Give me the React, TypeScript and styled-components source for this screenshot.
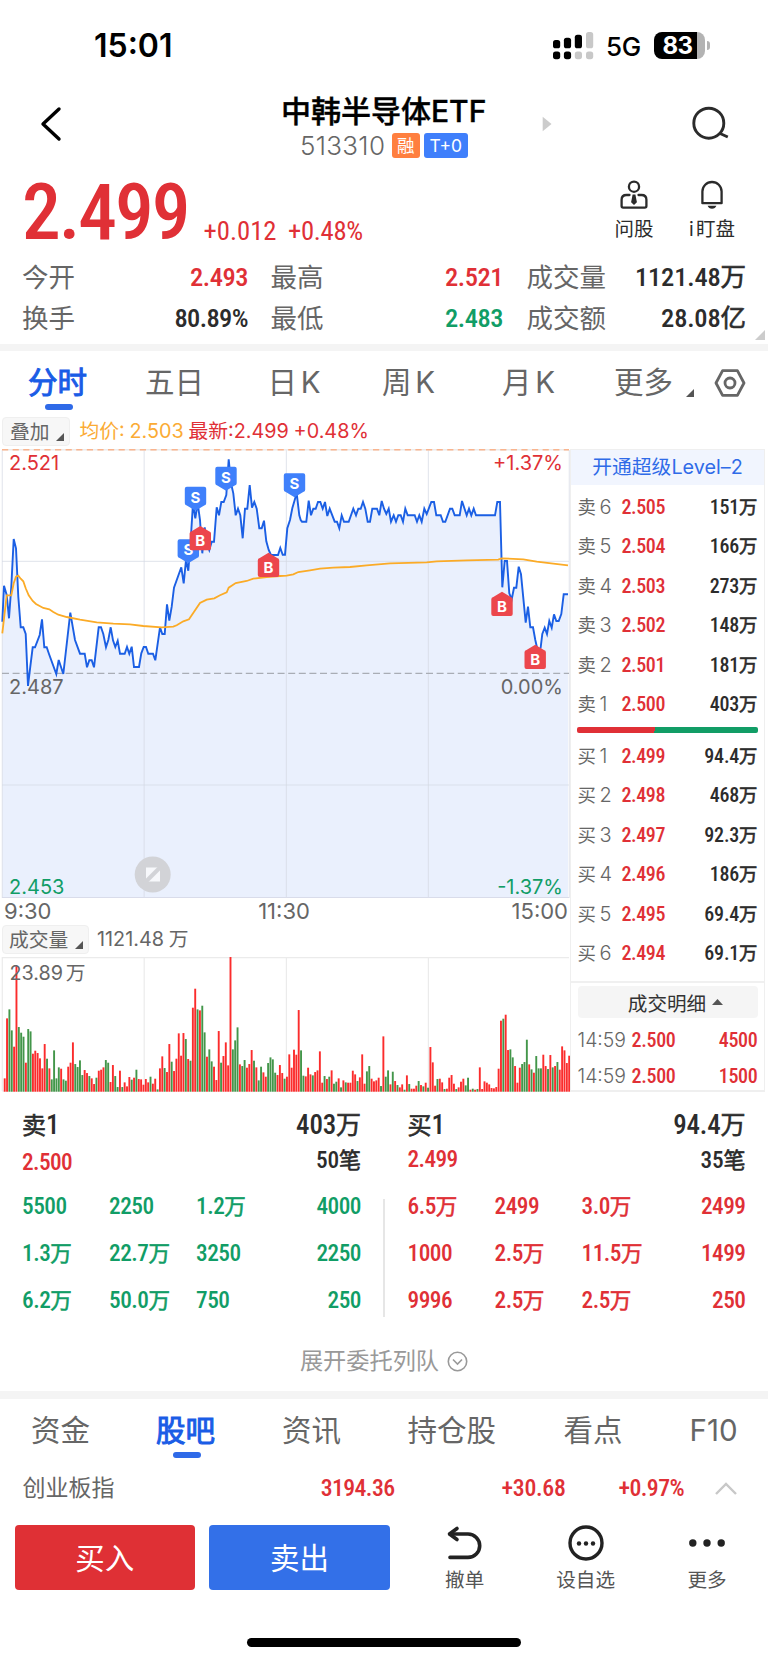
import React from 'react';
import styled, { createGlobalStyle, css } from 'styled-components';

const RED = '#e03036';
const GREEN = '#119d66';
const INK = '#2c2c2c';
const GRAY = '#666666';
const BLUE = '#1a5ce6';

const Global = createGlobalStyle`
  * { box-sizing: border-box; }
  body {
    margin: 0;
    background: #fff;
    color: ${INK};
    font-family: Inter, "Noto Sans CJK SC", sans-serif;
    white-space: nowrap;
  }
`;

const Screen = styled.main`
  width: 768px;
  height: 1662px;
  display: flex;
  flex-direction: column;
  overflow: hidden;
`;

const Num = styled.span<{ $size?: number; $color?: string; $weight?: number; $ls?: number }>`
  font-family: "Roboto Condensed", "Noto Sans CJK SC", sans-serif;
  font-weight: ${p => p.$weight ?? 500};
  font-size: ${p => p.$size ?? 20}px;
  letter-spacing: ${p => p.$ls ?? 0}px;
  color: ${p => p.$color ?? INK};
`;

const Unit = styled.span<{ $size: number }>`
  font-family: "Noto Sans CJK SC", sans-serif;
  font-size: ${p => p.$size}px;
  font-weight: 400;
  line-height: 0;
  letter-spacing: 0;
  -webkit-text-stroke: 0.6px currentColor;
`;

/* ---------- status bar ---------- */
const StatusBar = styled.header`
  height: 92px;
  padding: 30px 58px 0 94px;
  display: flex;
  justify-content: space-between;
  color: #000;
`;
const Clock = styled.div`
  font-size: 32px;
  line-height: 32px;
  font-weight: 600;
`;
const StatusRight = styled.div`
  display: flex;
  height: 31px;
  align-items: center;
`;
const Network = styled.span`
  font-size: 26px;
  font-weight: 500;
  letter-spacing: -0.4px;
  line-height: 30px;
  width: 34px;
  margin: 3px 14px 0 12px;
`;
const Battery = styled.div`
  width: 51px;
  height: 27px;
  border-radius: 8px;
  background: linear-gradient(90deg, #000 43px, #b3b3b3 43px);
  color: #fff;
  font-size: 24px;
  font-weight: 700;
  line-height: 27px;
  padding-left: 8.5px;
  letter-spacing: -0.5px;
`;
const BatteryNub = styled.div`
  width: 3px;
  height: 9px;
  margin-left: 2px;
  border-radius: 0 4px 4px 0;
  background: #b3b3b3;
`;

/* ---------- title ---------- */
const TitleBar = styled.div`
  height: 80px;
  display: grid;
  grid-template-columns: 281px 206px 1fr 100px;
`;
const BackIcon = styled.svg`margin: 13px 0 0 38px;`;
const TitleBlock = styled.div`
  display: flex;
  flex-direction: column;
  align-items: flex-start;
`;
const Name = styled.div`
  font-size: 30px;
  line-height: 39px;
  color: #000;
  font-weight: 500;
  -webkit-text-stroke: 0.4px #000;
`;
const CodeRow = styled.div`
  display: flex;
  align-items: center;
  height: 28px;
  margin-left: 19px;
`;
const Code = styled.span`
  width: 91.5px;
  font-size: 26px;
  font-weight: 350;
  letter-spacing: 0.3px;
  color: ${GRAY};
`;
const Tag = styled.span<{ $bg: string; $w: number }>`
  flex: 0 0 ${p => p.$w}px;
  height: 25px;
  border-radius: 3px;
  background: ${p => p.$bg};
  color: #fff;
  font-size: 17.5px;
  line-height: 25px;
  text-align: center;
  & + & { margin-left: 4px; }
`;
const NextIcon = styled.svg`margin: 24px 0 0 54.5px;`;
const SearchIcon = styled.svg`margin: 12px 0 0 20px;`;

/* ---------- quote ---------- */
const Quote = styled.section`
  height: 82px;
  padding-left: 22px;
  display: flex;
`;
const Price = styled(Num)`
  width: 181.5px;
  line-height: 82px;
`;
const Change = styled(Num)`
  width: 84.5px;
  line-height: 36px;
  padding-top: 41px;
`;
const QuickAction = styled.div<{ $w: number; $ml: number }>`
  width: ${p => p.$w}px;
  margin-left: ${p => p.$ml}px;
  padding-top: 8px;
  display: flex;
  flex-direction: column;
  align-items: center;
  font-size: 19.5px;
  line-height: 24px;
  svg { margin-bottom: 8px; }
`;
const SmallI = styled.span`letter-spacing: 2.5px;`;
const Stats = styled.section`
  height: 90px;
  padding: 3px 22px 0;
  display: grid;
  grid-template-columns: 226px 255px 243px;
  grid-auto-rows: 41px;
  position: relative;
`;
const Stat = styled.div<{ $pl?: number }>`
  display: flex;
  justify-content: space-between;
  line-height: 41px;
  font-size: 26.5px;
  color: ${GRAY};
  padding-left: ${p => p.$pl ?? 0}px;
`;
const StatValue = styled(Num)`
  line-height: 39.5px;
`;
const Corner = styled.svg`
  position: absolute;
  right: 3px;
  bottom: 4px;
`;
const Band = styled.div<{ $h: number }>`
  flex: none;
  height: ${p => p.$h}px;
  background: #f4f4f4;
`;

/* ---------- tabs ---------- */
const Tabs = styled.nav<{ $h: number; $pad: number; $cols: string }>`
  height: ${p => p.$h}px;
  padding-left: ${p => p.$pad}px;
  display: grid;
  grid-template-columns: ${p => p.$cols};
  justify-items: start;
`;
const Tab = styled.div<{ $active?: boolean }>`
  padding-top: 10px;
  font-size: 29.5px;
  line-height: 43px;
  word-spacing: -4.5px;
  color: ${GRAY};
  display: flex;
  flex-direction: column;
  align-items: center;
  ${p => p.$active && css`
    color: ${BLUE};
    -webkit-text-stroke: 1px ${BLUE};
    &::after {
      content: '';
      width: 28px;
      height: 6px;
      margin-left: 2px;
      border-radius: 3px;
      background: #2f6ae8;
    }
  `}
`;
const MoreTab = styled.div`
  display: flex;
  align-items: flex-end;
  svg { margin: 0 0 7.5px 13px; }
`;
const HexIcon = styled.svg`margin-top: 16.5px;`;

/* ---------- market area ---------- */
const Market = styled.section`
  display: flex;
  height: 676px;
`;
const ChartCol = styled.div`
  width: 570px;
  padding-left: 2px;
  display: flex;
  flex-direction: column;
`;
const Legend = styled.div<{ $h: number }>`
  flex: none;
  height: ${p => p.$h}px;
  display: flex;
  align-items: flex-start;
  font-size: 19.8px;
  line-height: 29px;
  word-spacing: -0.8px;
  color: ${GRAY};
`;
const Chip = styled.div<{ $w: number; $pl: number; $mr: number }>`
  width: ${p => p.$w}px;
  height: 29px;
  padding: 0 5px 4px ${p => p.$pl}px;
  margin-right: ${p => p.$mr}px;
  border: 1px solid #efefef;
  border-radius: 4px;
  background: #f7f7f7;
  line-height: 28px;
  display: flex;
  justify-content: space-between;
  svg { align-self: flex-end; }
`;
const Avg = styled.span`color: #fbab35;`;
const Last = styled.span`color: ${RED};`;
const Axis = styled.div`
  flex: none;
  height: 26px;
  padding: 0 2px;
  display: grid;
  grid-template-columns: 1fr auto 1fr;
  font-size: 22px;
  line-height: 25px;
  color: ${GRAY};
  & > :nth-child(2) { margin-right: 4px; }
  & > :last-child { text-align: right; }
`;
const ChartSvg = styled.svg`
  display: block;
  margin-left: -2px;
  flex: none;
  font-family: Inter, "Noto Sans CJK SC", sans-serif;
`;
const AxisMax = styled.text`word-spacing: -3px;`;

/* ---------- order book ---------- */
const Book = styled.aside`
  width: 195px;
  height: 643px;
  margin-top: 32px;
  border: 1px solid #efefef;
  border-bottom-width: 2px;
  display: flex;
  flex-direction: column;
  & > * { flex: none; }
`;
const Level2 = styled.div`
  height: 35px;
  background: #f1f5fe;
  color: #2f6be8;
  font-size: 19.8px;
  line-height: 34px;
  text-align: center;
`;
const BookRow = styled.div`
  height: 39.5px;
  line-height: 39.5px;
  padding: 0 6.5px;
  display: grid;
  grid-template-columns: 22px 22px 1fr auto;
  font-size: 18.4px;
  color: ${GRAY};
`;
const Digit = styled.span`font-size: 20px; font-weight: 350;`;
const Asks = styled.div`padding-top: 2.5px; height: 242.3px;`;
const Ratio = styled.div`
  height: 6px;
  margin: 0 6px;
  border-radius: 2px;
  background: linear-gradient(100deg, ${RED} 43%, ${GREEN} 43%);
`;
const Bids = styled.div`padding-top: 3.5px; height: 249.7px; border-bottom: 2px solid #f0f0f0;`;
const Detail = styled.div`
  height: 32px;
  margin: 3.5px 6px 3.2px 7px;
  background: #f5f5f5;
  border-radius: 4px;
  display: flex;
  align-items: center;
  justify-content: center;
  gap: 6px;
  font-size: 19.6px;
  padding-left: 15px;
  color: #333;
`;
const Trade = styled.div`
  height: 36px;
  line-height: 36px;
  padding: 0 6.5px;
  display: grid;
  grid-template-columns: 54px 1fr auto;
  font-size: 19.4px;
  font-weight: 350;
  color: ${GRAY};
`;

/* ---------- queue ---------- */
const Queue = styled.section`
  height: 232px;
  display: grid;
  grid-template-columns: 384px 384px;
`;
const Side = styled.div<{ $first?: boolean }>`
  padding: 13px ${p => (p.$first ? 23 : 22.5)}px 0 ${p => (p.$first ? 22 : 23.5)}px;
`;
const SideLine = styled.div<{ $h: number }>`
  height: ${p => p.$h}px;
  line-height: ${p => p.$h}px;
  display: flex;
  justify-content: space-between;
`;
const SidePrice = styled(Num)<{ $dy: number }>`margin-top: ${p => p.$dy}px;`;
const QGrid = styled.div<{ $divided: boolean }>`
  margin-top: 7.4px;
  display: grid;
  grid-template-columns: 87px 87px 1fr auto;
  grid-auto-rows: 46.6px;
  line-height: 46.6px;
  position: relative;
  & > :nth-child(4n) { text-align: right; }
  ${p => p.$divided && css`
    &::after {
      content: '';
      position: absolute;
      right: -23.5px;
      top: 16px;
      width: 1.5px;
      height: 118px;
      background: #e6e6e6;
    }
  `}
`;
const Expand = styled.div`
  height: 66px;
  padding-top: 11px;
  line-height: 50px;
  display: flex;
  justify-content: center;
  gap: 8px;
  font-size: 23.2px;
  color: #999;
  align-items: flex-start;
  svg { margin-top: 14.5px; }
`;

/* ---------- bottom ---------- */
const IndexRow = styled.div`
  height: 58px;
  padding: 0 31px 0 22.5px;
  line-height: 58px;
  display: grid;
  grid-template-columns: 150px 222px 171px 118.5px 1fr;
  justify-items: end;
  align-items: center;
  & > :first-child { justify-self: start; }
`;
const IndexName = styled.span`font-size: 23px; color: ${GRAY};`;
const Actions = styled.footer`
  height: 112px;
  padding: 8px 0 0 14.5px;
  display: flex;
  align-items: flex-start;
`;
const TradeButton = styled.button<{ $bg: string }>`
  width: 180.5px;
  height: 65px;
  margin-right: 14.5px;
  border: 0;
  border-radius: 4px;
  background: ${p => p.$bg};
  color: #fff;
  font: 400 29.5px/62px "Noto Sans CJK SC", sans-serif;
  padding: 0 0 3px;
`;
const ToolButton = styled.div<{ $w: number }>`
  width: ${p => p.$w}px;
  display: flex;
  flex-direction: column;
  align-items: center;
  font-size: 19.6px;
  line-height: 26px;
  color: #555;
  svg { margin-bottom: 6px; }
`;
const HomeBar = styled.div`
  width: 274px;
  height: 9.5px;
  margin: 8.5px auto 0;
  border-radius: 5px;
  background: #000;
`;

/* ---------- data ---------- */
const PX = 1 / 3;

const VOLUME = `655R 475R 448G 511G 560R 318R 501G 518G 530G 608R 507G 514G 581R 572R 579R 595R 625R 552R 596G 625R
658G 571G 655G 622G 626R 658G 662G 620R 608R 547R 612G 621G 601G 645G 630R 639R 648G 655R 672R 653G
632R 629R 622R 600G 608G 666R 615R 648G 681G 632R 681G 667R 679R 651R 659G 653R 629G 657R 658R 674R
657R 667R 650G 671R 656R 688G 625R 589R 624G 636R 552R 605G 633R 596R 520R 587R 519R 537G 597R 602G
443R 386R 448G 451R 437G 517G 590R 568G 604G 620R 660R 513R 608G 588R 547R 616R 291R 568G 541G 502G
613R 618G 600G 623R 612R 570R 602G 622R 661G 620G 637R 650R 609G 592G 598G 638G 645R 615R 639R 656G
650R 583R 623R 569R 584R 450R 571G 647G 649R 623R 643R 646G 636R 631R 574R 668R 648G 657R 650G 631R
671G 665G 655R 682G 661R 667G 668R 668R 632R 643R 663G 652R 583R 671R 634G 618G 656R 664R 661R 653R
678G 529R 650G 631G 673R 635G 663R 675G 682R 673R 689G 646R 672G 686R 686R 677R 663G 675R 679G 668R
683G 561R 607R 677R 657G 656R 667R 687G 686R 653R 645R 671R 687G 682R 665R 656R 676G 653G 689R 686G
689R 687G 622R 687R 664R 668R 673R 684R 685R 681R 626R 482R 476G 464R 570R 568G 592G 618R 668R 623R
612G 606G 539G 613R 628G 638R 588G 625G 625G 584R 618R 627G 585R 622G 618R 606G 629R 559R 571R 609R 587R`
  .split(/\s+/).map(v => ({ h: (695 - parseInt(v, 10)) * PX, up: v.endsWith('R') }));

const toPoints = (src: string, dx = 0) =>
  src.split(/\s+/).map(p => p.split(',').map(Number)).map(([x, y]) => `${((x + dx) * PX).toFixed(1)},${(y * PX - 9).toFixed(1)}`).join(' ');

const PRICE_AM = `7,545 12,437 20,465 27,535 34,440 41,297 48,325 55,470 62,562 70,562 77,582 84,738 91,680 98,622 105,622
119,585 126,538 133,622 140,622 147,642 169,702 176,660 190,702 211,518 218,560 225,600 240,641 254,641 261,682 268,661
275,661 282,682 296,562 303,562 310,582 318,622 325,600 332,562 339,601 346,621 353,602 360,641 374,641 381,621 388,641
395,620 402,681 417,681 424,640 431,621 438,621 445,641 459,641 466,661 480,562 487,582 494,582 501,493 508,542 515,500
522,443 544,382 551,430 558,360 565,392 572,300 579,190 586,235 593,190 600,240 607,340 614,262 621,310 628,330 635,305
642,305 650,202 657,226 664,186 671,186 679,165 686,58 693,130 700,160 707,226 714,206 721,226 728,295 735,206 742,206
749,135 756,203 763,186 770,206 778,265 785,265 792,242 799,304 806,330 813,345 834,345 841,324 848,344 855,344`;
const PRICE_PM = `22,265 30,240 37,205 44,180 50,160 58,226 62,240 66,245 79,245 86,182 93,226 100,206 107,206 114,186 121,186
128,206 135,186 142,228 149,206 164,245 171,245 178,265 185,226 192,245 206,245 220,206 228,226 235,206 242,206 249,186
256,206 263,245 270,245 277,206 291,206 298,226 305,183 312,206 319,222 326,206 333,245 341,226 348,245 355,226 362,226
369,245 376,206 383,226 404,226 411,245 418,226 425,245 433,206 440,222 454,186 462,186 469,226 482,226 489,245 496,245
510,206 517,206 524,226 539,226 546,183 560,226 567,206 574,226 581,206 588,226 645,226 652,186 660,186 667,442 674,363
681,363 688,460 695,478 702,443 709,443 716,380 723,403 737,548 744,500 751,562 759,562 766,600 775,640 782,622 787,582
794,563 801,582 808,543 815,563 822,523 829,543 836,543 844,522 851,463 864,463`;
const AVG_AM = `7,580 20,466 34,466 41,430 48,410 55,407 62,416 70,424 77,445 86,466 98,483 108,492 130,504 148,508 160,516
175,524 200,531 240,539 290,547 340,551 390,553 430,558 485,562 520,560 530,556 550,544 567,538 600,489 620,479 643,475
660,466 680,457 686,443 707,429 740,423 760,416 800,411`;
const AVG_PM = `0,408 20,407 40,403 55,396 90,391 120,386 160,383 210,381 260,376 330,370 440,367 470,364 560,361 655,359
665,355 730,358 770,365 820,371 864,376`;

const priceLine = `${toPoints(PRICE_AM)} ${toPoints(PRICE_PM, 840)}`;
const avgLine = `${toPoints(AVG_AM)} ${toPoints(AVG_PM, 840)}`;

const GRID_X = [144.2, 286.4, 428.4];
const SELLS = [[188.3, 90.3], [195.5, 37.7], [226, 17.7], [294.5, 24.3]];
const BUYS = [[200.3, 77], [268.5, 103.7], [502, 142.7], [535.2, 195.7]];

function Flag({ x, y, sell }: { x: number; y: number; sell?: boolean }) {
  const d = sell
    ? 'M-8.7 0H8.7Q10.7 0 10.7 2V16.5Q10.7 18.5 8.7 18.8L0 24L-8.7 18.8Q-10.7 18.5 -10.7 16.5V2Q-10.7 0 -8.7 0Z'
    : 'M-8.7 24.3H8.7Q10.7 24.3 10.7 22.3V7.6Q10.7 5.6 8.7 5.2L0 0L-8.7 5.2Q-10.7 5.6 -10.7 7.6V22.3Q-10.7 24.3 -8.7 24.3Z';
  return (
    <g transform={`translate(${x} ${y})`}>
      <path d={d} fill={sell ? '#3f80fb' : '#ec464c'} />
      <text x="0" y={sell ? 16 : 20} textAnchor="middle" fontSize="15" fontWeight="700" fill="#fff">{sell ? 'S' : 'B'}</text>
    </g>
  );
}

function PriceChart() {
  return (
    <ChartSvg width="570" height="450" viewBox="0 0 570 450">
      <polygon points={`2.3,449 ${priceLine} 568,449`} fill="#eaf0fd" />
      <g stroke="#d4d8e2" strokeOpacity=".6" strokeWidth="1.2">
        {GRID_X.map(x => <line key={x} x1={x} x2={x} y1="1" y2="449" />)}
        <line x1="2" x2="569" y1="112.3" y2="112.3" />
        <line x1="2" x2="569" y1="336" y2="336" />
        <line x1="2.3" x2="2.3" y1="1" y2="449" />
        <line x1="569.3" x2="569.3" y1="1" y2="449" />
      </g>
      <line x1="2" x2="569" y1="448.5" y2="448.5" stroke="#d9dcea" />
      <line x1="2" x2="569" y1=".8" y2=".8" stroke="#ececec" strokeWidth="1.4" />
      <line x1="2" x2="569" y1=".8" y2=".8" stroke="#f9b48e" strokeWidth="1.6" strokeDasharray="6.2 4.4" />
      <line x1="2" x2="569" y1="224.3" y2="224.3" stroke="#a9adb5" strokeWidth="1.2" strokeDasharray="7 3.6" />
      <g fontSize="20" fill={GRAY}>
        <text x="9" y="20.8" fill={RED}>2.521</text>
        <text x="563" y="20.8" textAnchor="end" fill={RED}>+1.37%</text>
        <text x="9" y="245">2.487</text>
        <text x="563" y="245" textAnchor="end">0.00%</text>
        <text x="9" y="445.3" fill={GREEN}>2.453</text>
        <text x="563" y="445.3" textAnchor="end" fill={GREEN}>-1.37%</text>
      </g>
      <polyline points={priceLine} fill="none" stroke="#1b5fe4" strokeWidth="1.9" strokeLinejoin="miter" />
      <polyline points={avgLine} fill="none" stroke="#fbab27" strokeWidth="1.8" />
      {SELLS.map(([x, y]) => <Flag key={x} x={x} y={y} sell />)}
      {BUYS.map(([x, y]) => <Flag key={x} x={x} y={y} />)}
      <circle cx="152.7" cy="425.5" r="18" fill="#d2d3d7" />
      <path d="M146 418.5H160V432.5H146Z" fill="#f7f8fb" />
      <path d="M144 434.5L162 416.5" stroke="#d2d3d7" strokeWidth="4" />
    </ChartSvg>
  );
}

function VolumeChart() {
  return (
    <ChartSvg width="570" height="135" viewBox="0 0 570 135">
      <g stroke="#ebebeb" strokeWidth="1.2">
        {[2.3, ...GRID_X].map(x => <line key={x} x1={x} x2={x} y1="0" y2="134" />)}
        <line x1="2" x2="569" y1=".6" y2=".6" />
        <line x1="2" x2="569" y1="134" y2="134" />
      </g>
      {VOLUME.map((b, i) => (
        <rect key={i} x={3.75 + i * 2.352} y={134.7 - b.h} width="1.9" height={b.h} fill={b.up ? '#fb2c2c' : '#43964a'} />
      ))}
      <AxisMax x="9.5" y="22.5" fontSize="19.8" fill={GRAY}>23.89 万</AxisMax>
    </ChartSvg>
  );
}

const Tri = () => (
  <svg width="8" height="8" viewBox="0 0 8 8"><path d="M8 0V8H0Z" fill="#555" /></svg>
);

const ASKS = [['6', '2.505', '151'], ['5', '2.504', '166'], ['4', '2.503', '273'], ['3', '2.502', '148'], ['2', '2.501', '181'], ['1', '2.500', '403']];
const BIDS = [['1', '2.499', '94.4'], ['2', '2.498', '468'], ['3', '2.497', '92.3'], ['4', '2.496', '186'], ['5', '2.495', '69.4'], ['6', '2.494', '69.1']];

const Level = ({ side, row }: { side: string; row: string[] }) => (
  <BookRow>
    <span>{side}</span>
    <Digit>{row[0]}</Digit>
    <Num $color={RED} $ls={-0.4}>{row[1]}</Num>
    <Num $ls={-0.2}>{row[2]}<Unit $size={18.4}>万</Unit></Num>
  </BookRow>
);

const Amount = ({ text, size, unit, color, ls = -0.2 }: { text: string; size: number; unit: number; color?: string; ls?: number }) => {
  const m = text.match(/^([\d.]+)(.*)$/)!;
  return <Num $size={size} $color={color} $ls={ls}>{m[1]}{m[2] && <Unit $size={unit}>{m[2]}</Unit>}</Num>;
};

const QUEUES = [
  { side: '卖1', vol: '403万', price: '2.500', count: '50笔', color: GREEN, dy: 1.5, rows: ['5500', '2250', '1.2万', '4000', '1.3万', '22.7万', '3250', '2250', '6.2万', '50.0万', '750', '250'] },
  { side: '买1', vol: '94.4万', price: '2.499', count: '35笔', color: RED, dy: -1.5, rows: ['6.5万', '2499', '3.0万', '2499', '1000', '2.5万', '11.5万', '1499', '9996', '2.5万', '2.5万', '250'] },
];

export default function App() {
  return (
    <Screen>
      <Global />
      <StatusBar>
        <Clock>15:01</Clock>
        <StatusRight>
          <svg width="41" height="28" viewBox="0 0 41 28">
            {[[0, 8], [10.9, 5.7], [21.8, 2.7], [33, 0]].map(([x, y], i) => (
              <g key={x}>
                <rect x={x} y={y} width="7.2" height={16.3 - y} rx="2.6" fill={i < 3 ? '#000' : '#c8c8c8'} />
                <rect x={x} y="19.5" width="7.2" height="7.7" rx="2.6" fill={i < 2 ? '#000' : '#c8c8c8'} />
              </g>
            ))}
          </svg>
          <Network>5G</Network>
          <Battery>83</Battery>
          <BatteryNub />
        </StatusRight>
      </StatusBar>

      <TitleBar>
        <BackIcon width="26" height="38" viewBox="0 0 26 38"><path d="M21 4L5 19L21 34" fill="none" stroke="#000" strokeWidth="3.4" strokeLinecap="round" strokeLinejoin="round" /></BackIcon>
        <TitleBlock>
          <Name>中韩半导体ETF</Name>
          <CodeRow>
            <Code>513310</Code>
            <Tag $bg="#ff7f3f" $w={28.5}>融</Tag>
            <Tag $bg="#3f7ffb" $w={43.5}>T+0</Tag>
          </CodeRow>
        </TitleBlock>
        <NextIcon width="10" height="16" viewBox="0 0 10 16"><path d="M.7 .8L9.5 8L.7 15.2Z" fill="#ccc" /></NextIcon>
        <SearchIcon width="42" height="40" viewBox="0 0 42 40" fill="none" stroke="#2b2b2b" strokeWidth="2.9">
          <circle cx="20.8" cy="19.2" r="15" /><path d="M31.5 29.3L39.8 33" />
        </SearchIcon>
      </TitleBar>

      <Quote>
        <Price $size={77.5} $color={RED} $ls={-2} $weight={500}>2.499</Price>
        <Change $size={26.7} $color={RED} $weight={400}>+0.012</Change>
        <Change $size={26.7} $color={RED} $weight={400} $ls={-0.3}>+0.48%</Change>
        <QuickAction $w={42} $ml={240.5}>
          <svg width="28" height="29" viewBox="0 0 28 29" fill="none" stroke="#2b2b2b" strokeWidth="2.3">
            <circle cx="14" cy="6.7" r="5.1" />
            <path d="M9.5 15H6.5Q1.6 15 1.6 19.8V26Q1.6 27.6 3.2 27.6H24.8Q26.4 27.6 26.4 26V19.8Q26.4 15 21.5 15H18.5" strokeLinecap="round" strokeLinejoin="round" />
            <path d="M12.6 14.6H15.4L16.9 22.2L14 25L11.1 22.2Z" fill="#2b2b2b" stroke="none" />
          </svg>
          问股
        </QuickAction>
        <QuickAction $w={50} $ml={32}>
          <svg width="24" height="29" viewBox="0 0 24 29" fill="none" stroke="#2b2b2b" strokeWidth="2.3" strokeLinejoin="round">
            <path d="M2.4 23.2V11.6A9.6 9.6 0 0 1 21.6 11.6V23.2Z" />
            <path d="M7.6 25.8H16.4Q15.3 28.7 12 28.7Q8.7 28.7 7.6 25.8Z" fill="#2b2b2b" stroke="none" />
          </svg>
          <span><SmallI>i</SmallI>盯盘</span>
        </QuickAction>
      </Quote>

      <Stats>
        <Stat>今开<StatValue $size={26.5} $color={RED} $ls={-0.5}>2.493</StatValue></Stat>
        <Stat $pl={22.5}>最高<StatValue $size={26.5} $color={RED} $ls={-0.5}>2.521</StatValue></Stat>
        <Stat $pl={23.5}>成交量<StatValue $size={26.5} $ls={-0.2}>1121.48<Unit $size={25.5}>万</Unit></StatValue></Stat>
        <Stat>换手<StatValue $size={26.5} $ls={-0.6}>80.89%</StatValue></Stat>
        <Stat $pl={22.5}>最低<StatValue $size={26.5} $color={GREEN} $ls={-0.5}>2.483</StatValue></Stat>
        <Stat $pl={23.5}>成交额<StatValue $size={26.5} $ls={-0.2}>28.08<Unit $size={25.5}>亿</Unit></StatValue></Stat>
        <Corner width="10" height="10" viewBox="0 0 10 10"><path d="M10 0V10H0Z" fill="#ccc" /></Corner>
      </Stats>
      <Band $h={7} />

      <Tabs $h={66} $pad={28} $cols="117px 122.5px 114.5px 120px 112px 100px 1fr">
        <Tab $active>分时</Tab>
        <Tab>五日</Tab>
        <Tab>日 K</Tab>
        <Tab>周 K</Tab>
        <Tab>月 K</Tab>
        <Tab><MoreTab>更多<Tri /></MoreTab></Tab>
        <HexIcon width="32" height="30" viewBox="0 0 32 30" fill="none" stroke="#666" strokeWidth="2.8">
          <path d="M8.6 2.6H23.4L30 15L23.4 27.4H8.6L2 15Z" strokeLinejoin="round" /><circle cx="16" cy="15" r="5" />
        </HexIcon>
      </Tabs>

      <Market>
        <ChartCol>
          <Legend $h={32}>
            <Chip $w={68} $pl={7} $mr={9.5}>叠加<Tri /></Chip>
            <span><Avg>均价: 2.503 </Avg><Last>最新:2.499 +0.48%</Last></span>
          </Legend>
          <PriceChart />
          <Axis><span>9:30</span><span>11:30</span><span>15:00</span></Axis>
          <Legend $h={32}>
            <Chip $w={87} $pl={6} $mr={8}>成交量<Tri /></Chip>
            1121.48 万
          </Legend>
          <VolumeChart />
        </ChartCol>
        <Book>
          <Level2>开通超级Level–2</Level2>
          <Asks>{ASKS.map(r => <Level key={r[0]} side="卖" row={r} />)}</Asks>
          <Ratio />
          <Bids>{BIDS.map(r => <Level key={r[0]} side="买" row={r} />)}</Bids>
          <Detail>成交明细<svg width="11" height="6" viewBox="0 0 11 6"><path d="M5.5 0L11 6H0Z" fill="#555" /></svg></Detail>
          <Trade>14:59<Num $color={RED} $ls={-0.3}>2.500</Num><Num $color={RED} $ls={-0.3}>4500</Num></Trade>
          <Trade>14:59<Num $color={RED} $ls={-0.3}>2.500</Num><Num $color={RED} $ls={-0.3}>1500</Num></Trade>
        </Book>
      </Market>

      <Queue>
        {QUEUES.map((q, i) => (
          <Side key={q.side} $first={i === 0}>
            <SideLine $h={38}>
              <Num $size={27}><Unit $size={24}>{q.side[0]}</Unit>{q.side[1]}</Num>
              <Amount text={q.vol} size={27} unit={25} />
            </SideLine>
            <SideLine $h={32}>
              <SidePrice $dy={q.dy} $size={23.3} $color={RED} $ls={-0.6}>{q.price}</SidePrice>
              <Amount text={q.count} size={23.3} unit={22} />
            </SideLine>
            <QGrid $divided={i === 0}>
              {q.rows.map((r, k) => <Amount key={k} text={r} size={23.3} unit={21.5} color={q.color} ls={-0.5} />)}
            </QGrid>
          </Side>
        ))}
      </Queue>
      <Expand>
        展开委托列队
        <svg width="21" height="21" viewBox="0 0 21 21" fill="none" stroke="#999" strokeWidth="1.6">
          <circle cx="10.5" cy="10.5" r="9.2" /><path d="M6 8.5L10.5 13L15 8.5" />
        </svg>
      </Expand>
      <Band $h={8} />

      <Tabs $h={60} $pad={31} $cols="125px 126px 125.5px 156px 126px 1fr">
        <Tab>资金</Tab>
        <Tab $active>股吧</Tab>
        <Tab>资讯</Tab>
        <Tab>持仓股</Tab>
        <Tab>看点</Tab>
        <Tab>F10</Tab>
      </Tabs>

      <IndexRow>
        <IndexName>创业板指</IndexName>
        <Num $size={23.8} $color={RED} $ls={-0.6}>3194.36</Num>
        <Num $size={23.8} $color={RED} $ls={-0.3}>+30.68</Num>
        <Num $size={23.8} $color={RED} $ls={-0.6}>+0.97%</Num>
        <svg width="22" height="13" viewBox="0 0 22 13"><path d="M1 12L11 2L21 12" fill="none" stroke="#c8c8c8" strokeWidth="2.4" /></svg>
      </IndexRow>

      <Actions>
        <TradeButton $bg="#df3035">买入</TradeButton>
        <TradeButton $bg="#3370e8">卖出</TradeButton>
        <ToolButton $w={121}>
          <svg width="38" height="36" viewBox="0 0 38 36" fill="none" stroke="#222" strokeWidth="3.6" strokeLinecap="round" strokeLinejoin="round">
            <path d="M11 3.5L3.5 9L11 14.5" /><path d="M4 9H22A11.7 11.7 0 0 1 22 32.4H4" />
          </svg>
          撤单
        </ToolButton>
        <ToolButton $w={121}>
          <svg width="38" height="36" viewBox="0 0 38 36" fill="none" stroke="#222" strokeWidth="3.4">
            <circle cx="19" cy="18" r="16" />
            <g fill="#222" stroke="none"><circle cx="12" cy="18.5" r="2.2" /><circle cx="19" cy="18.5" r="2.2" /><circle cx="26" cy="18.5" r="2.2" /></g>
          </svg>
          设自选
        </ToolButton>
        <ToolButton $w={122}>
          <svg width="38" height="36" viewBox="0 0 38 36" fill="#222"><circle cx="4.8" cy="18" r="3.7" /><circle cx="19" cy="18" r="3.7" /><circle cx="33.2" cy="18" r="3.7" /></svg>
          更多
        </ToolButton>
      </Actions>
      <HomeBar />
    </Screen>
  );
}
